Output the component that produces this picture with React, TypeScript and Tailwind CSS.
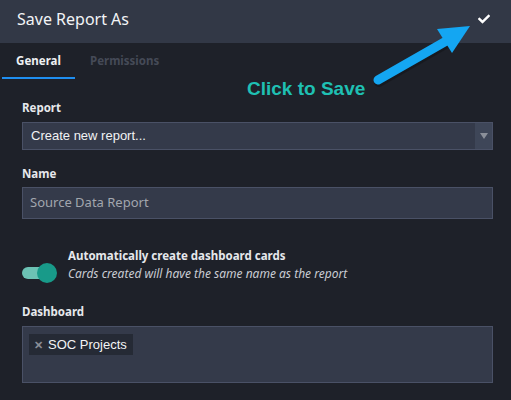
import { FaCheck } from "react-icons/fa";

function Label({ children }: { children: string }) {
  return (
    <div className="text-[11.5px] font-bold leading-none text-[#e6e8ec]">
      {children}
    </div>
  );
}

export default function App() {
  return (
    <div
      className="relative h-[400px] w-[511px] overflow-hidden bg-[#1e2129]"
      style={{ fontFamily: '"Noto Sans", "Open Sans", sans-serif' }}
    >
      {/* Header */}
      <div className="flex h-[43px] items-center justify-between bg-[#323846] pb-[5px] pl-[17px] pr-[21px]">
        <h1 className="text-[16px] leading-none text-[#f3f4f6]">Save Report As</h1>
        <FaCheck className="h-[12px] w-[12px] text-white" />
      </div>

      {/* Tabs */}
      <div className="flex h-[36px] items-stretch pl-[2px]">
        <div className="flex w-[73px] items-center justify-center border-b-2 border-[#1f8ef0] pt-[1px] text-[11.5px] font-bold text-[#eef0f3]">
          General
        </div>
        <div className="flex items-center pl-[15px] text-[11.5px] font-bold text-[#454a57]">
          Permissions
        </div>
      </div>

      {/* Body */}
      <div className="flex flex-col pl-[22px] pr-[18px] pt-[23px]">
        <Label>Report</Label>
        <div className="mt-[8px] flex h-[28px] items-stretch border border-[#4a5166] bg-[#343a4a]">
          <div
            className="flex flex-1 items-center pl-[8px] text-[13px] text-[#f1f2f4]"
            style={{ fontFamily: '"Liberation Sans", Arial, sans-serif' }}
          >
            Create new report...
          </div>
          <div className="flex w-[17px] items-center justify-center bg-[#3e4658]">
            <svg width="8" height="6" viewBox="0 0 8 6">
              <path d="M0 0h8L4 6z" fill="#8a8f99" />
            </svg>
          </div>
        </div>

        <div className="mt-[18px]">
          <Label>Name</Label>
        </div>
        <div className="mt-[8px] flex h-[32px] items-center border border-[#4a5166] bg-[#343a4a] pl-[7px] text-[13px] text-[#a2a6ae]">
          Source Data Report
        </div>

        <div className="mt-[28px] flex items-start gap-[11px]">
          <div className="relative mt-[16px] h-[20px] w-[35px]">
            <div className="absolute left-0 top-[4px] h-[12px] w-[30px] rounded-full bg-[#6cc2b4]" />
            <div className="absolute right-0 top-0 h-[20px] w-[20px] rounded-full bg-[#189a89]" />
          </div>
          <div className="flex flex-col">
            <div className="text-[11.5px] font-bold leading-[18px] text-[#e6e8ec]">
              Automatically create dashboard cards
            </div>
            <div className="text-[12px] italic leading-[18px] text-[#c9ccd3]">
              Cards created will have the same name as the report
            </div>
          </div>
        </div>

        <div className="mt-[23px]">
          <Label>Dashboard</Label>
        </div>
        <div className="mt-[8px] h-[57px] border border-[#4a5166] bg-[#343a4a] px-[6px] pt-[4px]">
          <div
            className="inline-flex h-[21px] items-center gap-[5px] bg-[#252a35] pl-[5px] pr-[6px] text-[13px] text-[#f3f4f6]"
            style={{ fontFamily: '"Liberation Sans", Arial, sans-serif' }}
          >
            <span className="text-[11px] font-bold text-[#8a8e97]">✕</span>
            SOC Projects
          </div>
        </div>
      </div>

      {/* Annotation */}
      <div
        className="absolute left-[247px] top-[75px] text-[19px] font-bold text-[#1fc0b3]"
        style={{ fontFamily: '"Liberation Sans", Arial, sans-serif' }}
      >
        Click to Save
      </div>
      <svg className="absolute left-0 top-0" width="511" height="100" viewBox="0 0 511 100">
        <line x1="378" y1="80" x2="448" y2="40" stroke="#0f1116" strokeOpacity="0.5" strokeWidth="10" strokeLinecap="round" transform="translate(1,2)" />
        <line x1="378" y1="80" x2="448" y2="40" stroke="#14a6f2" strokeWidth="9" strokeLinecap="round" />
        <path d="M470 26L437 29L452 53Z" fill="#14a6f2" />
      </svg>
    </div>
  );
}
